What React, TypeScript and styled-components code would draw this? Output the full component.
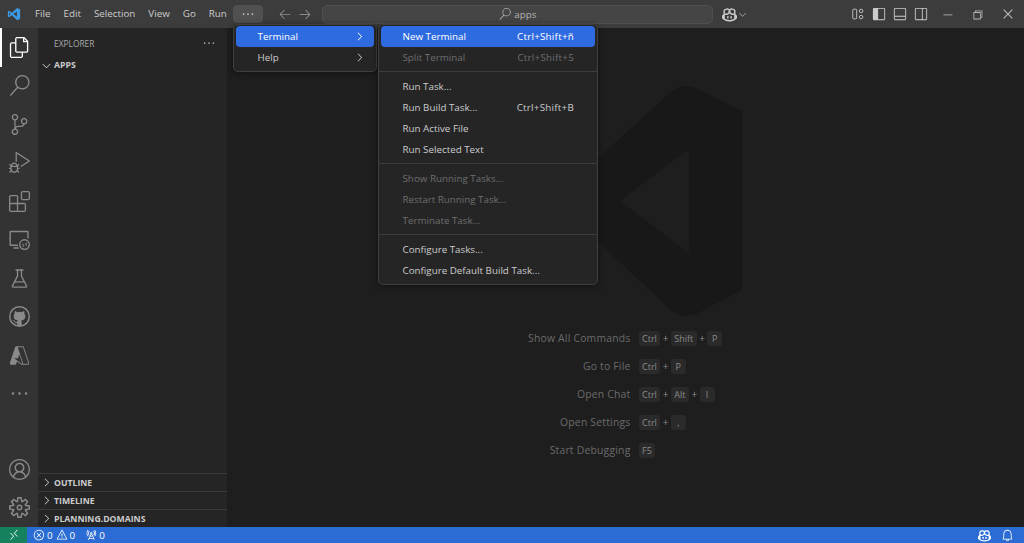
import React from 'react'
import styled, { createGlobalStyle } from 'styled-components'
import {
  VscFiles, VscSearch, VscSourceControl, VscDebugAlt, VscExtensions, VscRemoteExplorer,
  VscBeaker, VscGithub, VscAzure, VscEllipsis, VscAccount, VscSettingsGear,
  VscChevronRight, VscChevronDown, VscArrowLeft, VscArrowRight, VscLayoutSidebarLeft,
  VscLayoutPanelOff, VscLayoutSidebarRightOff, VscChromeMinimize, VscChromeRestore,
  VscChromeClose, VscBell, VscError, VscWarning, VscRadioTower, VscRemote, VscCopilot,
} from 'react-icons/vsc'

const GlobalStyle = createGlobalStyle`
  html, body { margin: 0; padding: 0; height: 100%; background: #1e1e1e; }
  #root { height: 100%; }
  * { box-sizing: border-box; }
`

const Window = styled.div`
  position: relative;
  width: 1024px;
  height: 543px;
  overflow: hidden;
  display: grid;
  grid-template-rows: 28px 1fr 16px;
  font-family: "Open Sans", "Noto Sans", sans-serif;
  font-size: 9.8px;
  color: #cccccc;
`

const TitleBar = styled.header`
  display: flex;
  align-items: center;
  background: #3c3c3c;
  padding-left: 7px;
`

const Logo = styled.svg`
  width: 14px;
  height: 14px;
  margin-right: 7.5px;
  flex: none;
`

const MenuLabel = styled.span`
  padding: 0 6.5px;
  font-size: 9.8px;
  line-height: 18px;
  color: #cccccc;
`

const MoreButton = styled.div`
  width: 30px;
  height: 18px;
  border-radius: 4px;
  background: #505050;
  display: flex;
  align-items: center;
  justify-content: center;
`

const NavArrows = styled.div`
  display: flex;
  gap: 6px;
  margin: 0 10px 0 15px;
  color: #8e8e8e;
`

const CommandCenter = styled.div`
  width: 391px;
  height: 19px;
  background: #454545;
  border: 1px solid #4f4f4f;
  border-radius: 5px;
  display: flex;
  align-items: center;
  justify-content: center;
  gap: 3px;
  color: #b4b4b4;
  font-size: 9.8px;
`

const CopilotGroup = styled.div`
  display: flex;
  align-items: center;
  margin-left: 9px;
  color: #cccccc;
`

const LayoutGroup = styled.div`
  display: flex;
  align-items: center;
  gap: 7px;
  margin-left: 103px;
  color: #cccccc;
`

const WindowControls = styled.div`
  display: flex;
  align-items: center;
  margin-left: 13px;
  color: #b8b8b8;
  gap: 17px;
`

const Main = styled.div`
  display: flex;
  min-height: 0;
`

const ActivityBar = styled.nav`
  width: 38px;
  flex: none;
  background: #333333;
  display: flex;
  flex-direction: column;
  justify-content: space-between;
`

const ActivityGroup = styled.div`
  display: flex;
  flex-direction: column;
`

const ActivityItem = styled.div<{ $active?: boolean }>`
  height: 38.5px;
  display: flex;
  align-items: center;
  justify-content: center;
  color: ${p => (p.$active ? '#ffffff' : '#8a8a8a')};
  border-left: 2px solid ${p => (p.$active ? '#ffffff' : 'transparent')};
  padding-right: 2px;
`

const SideBar = styled.aside`
  width: 189px;
  flex: none;
  background: #252526;
  display: flex;
  flex-direction: column;
`

const SideHeader = styled.div`
  height: 30px;
  display: flex;
  align-items: center;
  justify-content: space-between;
  padding: 0 11px 0 16px;
  font-size: 8.4px;
  color: #a9a9a9;
`

const TreeRow = styled.div`
  height: 18px;
  margin-top: -2px;
  display: flex;
  align-items: center;
  gap: 1px;
  padding-left: 2px;
  font-size: 8.7px;
  font-weight: 700;
  color: #cccccc;
`

const SideSpacer = styled.div`
  flex: 1;
`

const Section = styled.div`
  height: 18px;
  border-top: 1px solid #3a3a3a;
  display: flex;
  align-items: center;
  gap: 1px;
  padding-left: 2px;
  font-size: 8.7px;
  font-weight: 700;
  color: #cccccc;
`

const Editor = styled.main`
  flex: 1;
  min-width: 0;
  background: #1e1e1e;
  display: flex;
  flex-direction: column;
  align-items: center;
  padding-top: 57px;
`

const Watermark = styled.svg`
  width: 234px;
  height: 234px;
  flex: none;
  color: #181818;
`

const Hints = styled.div`
  display: grid;
  grid-template-columns: 103px auto;
  grid-auto-rows: 28px;
  column-gap: 8px;
  margin-top: 5px;
  margin-left: 7px;
`

const HintLabel = styled.span`
  justify-self: end;
  align-self: center;
  white-space: nowrap;
  font-size: 10.4px;
  letter-spacing: 0.2px;
  color: #6b6b6b;
`

const HintKeys = styled.span`
  display: flex;
  align-items: center;
  width: 92px;
`

const Key = styled.kbd`
  height: 15px;
  min-width: 15px;
  padding: 0 3.5px;
  border-radius: 3px;
  background: #2a2a2a;
  color: #8a8a8a;
  font-family: inherit;
  font-size: 9px;
  line-height: 15px;
  text-align: center;
`

const Plus = styled.span`
  width: 10.5px;
  text-align: center;
  font-size: 10px;
  color: #8a8a8a;
`

const StatusBar = styled.footer`
  display: flex;
  align-items: center;
  background: #2b6cd4;
  color: #ffffff;
  font-size: 9.8px;
`

const RemoteBox = styled.div`
  width: 27px;
  height: 100%;
  background: #16825d;
  display: flex;
  align-items: center;
  justify-content: center;
  margin-right: 6px;
`

const StatusItem = styled.span<{ $gap?: number }>`
  display: flex;
  align-items: center;
  gap: 2px;
  margin-left: ${p => p.$gap ?? 0}px;
`

const StatusRight = styled.div`
  margin-left: auto;
  display: flex;
  align-items: center;
  gap: 10.5px;
  padding-right: 10px;
`

const Menu = styled.div<{ $left: number; $width: number }>`
  position: absolute;
  top: 24px;
  left: ${p => p.$left}px;
  width: ${p => p.$width}px;
  padding: 1px 2px 3px;
  background: #252526;
  border: 1px solid #3f3f40;
  border-radius: 5px;
  box-shadow: 0 1px 6px rgba(0, 0, 0, 0.45);
`

const Item = styled.div<{ $selected?: boolean; $disabled?: boolean }>`
  height: 21px;
  display: flex;
  align-items: center;
  padding: 0 6px 0 21.5px;
  border-radius: 4px;
  font-size: 9.8px;
  white-space: nowrap;
  background: ${p => (p.$selected ? '#2f6be0' : 'transparent')};
  color: ${p => (p.$selected ? '#ffffff' : p.$disabled ? '#6e6e6e' : '#cccccc')};
`

const Shortcut = styled.span`
  margin-left: auto;
  padding-right: 15px;
  letter-spacing: 0.25px;
`

const Arrow = styled.span`
  margin-left: auto;
  display: flex;
  margin-right: 2px;
`

const Divider = styled.div`
  height: 1px;
  margin: 3px -2px 4px;
  background: #3c3c3d;
`

const CustomLayoutIcon = () => (
  <svg width="14" height="14" viewBox="0 0 16 16" fill="none" stroke="currentColor" strokeWidth="1">
    <rect x="2" y="2.5" width="4.5" height="11" rx="1" />
    <circle cx="11.5" cy="4.5" r="2" />
    <circle cx="11.5" cy="11.5" r="2" />
  </svg>
)

const hints: { label: string; keys: string[] }[] = [
  { label: 'Show All Commands', keys: ['Ctrl', 'Shift', 'P'] },
  { label: 'Go to File', keys: ['Ctrl', 'P'] },
  { label: 'Open Chat', keys: ['Ctrl', 'Alt', 'I'] },
  { label: 'Open Settings', keys: ['Ctrl', ','] },
  { label: 'Start Debugging', keys: ['F5'] },
]

export default function App() {
  return (
    <Window>
      <GlobalStyle />
      <TitleBar>
        <Logo viewBox="0 0 24 24">
          <path d="M17.5 1.5 8.2 10 3.6 6.5 1.5 7.6v8.8l2.1 1.1L8.2 14l9.3 8.5 5-2.4V3.9l-5-2.4zM17 7.6v8.8L11.2 12 17 7.6zM3.6 9.4 6 12l-2.4 2.6V9.4z" fill="#3b9ae6" />
        </Logo>
        {['File', 'Edit', 'Selection', 'View', 'Go', 'Run'].map(m => (
          <MenuLabel key={m}>{m}</MenuLabel>
        ))}
        <MoreButton><VscEllipsis size={14} /></MoreButton>
        <NavArrows>
          <VscArrowLeft size={14} />
          <VscArrowRight size={14} />
        </NavArrows>
        <CommandCenter>
          <VscSearch size={12} />
          apps
        </CommandCenter>
        <CopilotGroup>
          <VscCopilot size={15} />
          <VscChevronDown size={11} />
        </CopilotGroup>
        <LayoutGroup>
          <CustomLayoutIcon />
          <VscLayoutSidebarLeft size={14} />
          <VscLayoutPanelOff size={14} />
          <VscLayoutSidebarRightOff size={14} />
        </LayoutGroup>
        <WindowControls>
          <VscChromeMinimize size={13} />
          <VscChromeRestore size={13} />
          <VscChromeClose size={14} />
        </WindowControls>
      </TitleBar>

      <Main>
        <ActivityBar>
          <ActivityGroup>
            <ActivityItem $active><VscFiles size={21} /></ActivityItem>
            <ActivityItem><VscSearch size={21} /></ActivityItem>
            <ActivityItem><VscSourceControl size={21} /></ActivityItem>
            <ActivityItem><VscDebugAlt size={21} /></ActivityItem>
            <ActivityItem><VscExtensions size={21} /></ActivityItem>
            <ActivityItem><VscRemoteExplorer size={21} /></ActivityItem>
            <ActivityItem><VscBeaker size={21} /></ActivityItem>
            <ActivityItem><VscGithub size={21} /></ActivityItem>
            <ActivityItem><VscAzure size={21} /></ActivityItem>
            <ActivityItem><VscEllipsis size={21} /></ActivityItem>
          </ActivityGroup>
          <ActivityGroup>
            <ActivityItem><VscAccount size={21} /></ActivityItem>
            <ActivityItem><VscSettingsGear size={21} /></ActivityItem>
          </ActivityGroup>
        </ActivityBar>

        <SideBar>
          <SideHeader>
            EXPLORER
            <VscEllipsis size={14} />
          </SideHeader>
          <TreeRow><VscChevronDown size={13} />APPS</TreeRow>
          <SideSpacer />
          <Section><VscChevronRight size={13} />OUTLINE</Section>
          <Section><VscChevronRight size={13} />TIMELINE</Section>
          <Section><VscChevronRight size={13} />PLANNING.DOMAINS</Section>
        </SideBar>

        <Editor>
          <Watermark viewBox="0 0 234 234">
            <path
              fill="currentColor"
              fillRule="evenodd"
              d="M163 6Q176-3 189 4L233 26V205L189 228Q176 235 163 226L89 157 58 129 20 160 0 146V86L20 72 58 103 89 73ZM111 116 180 168V64Z"
            />
          </Watermark>
          <Hints>
            {hints.map(h => (
              <React.Fragment key={h.label}>
                <HintLabel>{h.label}</HintLabel>
                <HintKeys>
                  {h.keys.map((k, i) => (
                    <React.Fragment key={k}>
                      {i > 0 && <Plus>+</Plus>}
                      <Key>{k}</Key>
                    </React.Fragment>
                  ))}
                </HintKeys>
              </React.Fragment>
            ))}
          </Hints>
        </Editor>
      </Main>

      <StatusBar>
        <RemoteBox><VscRemote size={12} /></RemoteBox>
        <StatusItem><VscError size={12} />0</StatusItem>
        <StatusItem $gap={3}><VscWarning size={12} />0</StatusItem>
        <StatusItem $gap={10}><VscRadioTower size={12} />0</StatusItem>
        <StatusRight>
          <VscCopilot size={13} />
          <VscBell size={13} />
        </StatusRight>
      </StatusBar>

      <Menu $left={233} $width={144}>
        <Item $selected>Terminal<Arrow><VscChevronRight size={13} /></Arrow></Item>
        <Item>Help<Arrow><VscChevronRight size={13} /></Arrow></Item>
      </Menu>

      <Menu $left={378} $width={220}>
        <Item $selected>New Terminal<Shortcut>Ctrl+Shift+ñ</Shortcut></Item>
        <Item $disabled>Split Terminal<Shortcut>Ctrl+Shift+5</Shortcut></Item>
        <Divider />
        <Item>Run Task...</Item>
        <Item>Run Build Task...<Shortcut>Ctrl+Shift+B</Shortcut></Item>
        <Item>Run Active File</Item>
        <Item>Run Selected Text</Item>
        <Divider />
        <Item $disabled>Show Running Tasks...</Item>
        <Item $disabled>Restart Running Task...</Item>
        <Item $disabled>Terminate Task...</Item>
        <Divider />
        <Item>Configure Tasks...</Item>
        <Item>Configure Default Build Task...</Item>
      </Menu>
    </Window>
  )
}
